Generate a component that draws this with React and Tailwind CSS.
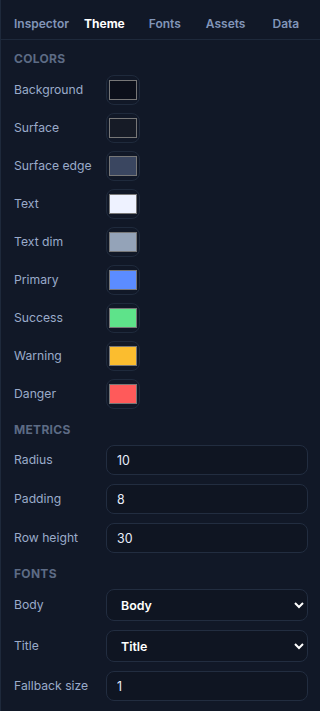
import React from 'react';

const colors = [
  { label: 'Background', value: '#0b0f1a' },
  { label: 'Surface', value: '#161b26' },
  { label: 'Surface edge', value: '#3a4660' },
  { label: 'Text', value: '#eef2ff' },
  { label: 'Text dim', value: '#94a3b8' },
  { label: 'Primary', value: '#5b8cff' },
  { label: 'Success', value: '#5ee38a' },
  { label: 'Warning', value: '#fbbd2f' },
  { label: 'Danger', value: '#ff5a5a' },
];

const tabs = ['Inspector', 'Theme', 'Fonts', 'Assets', 'Data'];

function Section({ title, children }) {
  return (
    <div className="flex flex-col">
      <div className="text-xs leading-4 font-bold uppercase tracking-wide text-[#5d6b85]">{title}</div>
      {children}
    </div>
  );
}

function Row({ label, children }) {
  return (
    <div className="flex items-center">
      <span className="w-[92px] shrink-0 text-[12.2px] text-[#9aabca]">{label}</span>
      {children}
    </div>
  );
}

const field =
  'h-[30px] min-w-0 flex-1 rounded-lg border border-[#222d40] bg-[#0f1522] px-2.5 text-[12.4px] text-[#e8eefc] outline-none';
const select =
  'h-8 min-w-0 flex-1 rounded-lg border border-[#222d40] bg-[#0f1522] px-2.5 text-[12.4px] font-semibold text-white outline-none';

export default function App() {
  return (
    <div
      className="min-h-[711px] w-[320px] bg-[#111827] border-l border-[#1e293b]"
      style={{ fontFamily: 'Inter, "Noto Sans", sans-serif' }}
    >
      {/* Tab bar */}
      <div className="flex h-10 items-center border-b border-[#1e293b] pt-2 pl-[13px]">
        {tabs.map((t, i) => (
          <button
            key={t}
            className={
              (t === 'Theme' ? 'text-white font-bold' : 'text-[#8195b8] font-semibold') +
              ' text-xs ' +
              (i === 0 ? '' : i === 1 ? 'ml-[15px]' : i === 2 ? 'ml-[24px]' : i === 3 ? 'ml-[25px]' : 'ml-[27px]')
            }
          >
            {t}
          </button>
        ))}
      </div>

      <div className="flex flex-col gap-[13px] pl-[13px] pr-3 pt-[11px]">
        <Section title="Colors">
          <div className="mt-[8px] flex flex-col gap-2">
            {colors.map((c) => (
              <Row key={c.label} label={c.label}>
                <input
                  type="color"
                  defaultValue={c.value}
                  className="h-[30px] w-[34px] rounded-lg border border-[#1f2a3c] bg-transparent"
                />
              </Row>
            ))}
          </div>
        </Section>

        <Section title="Metrics">
          <div className="mt-[7px] flex flex-col gap-[9px]">
            {[
              ['Radius', '10'],
              ['Padding', '8'],
              ['Row height', '30'],
            ].map(([l, v]) => (
              <Row key={l} label={l}>
                <input defaultValue={v} className={field} />
              </Row>
            ))}
          </div>
        </Section>

        <Section title="Fonts">
          <div className="mt-[7px] flex flex-col gap-[9px]">
            <Row label="Body">
              <select className={select}>
                <option>Body</option>
              </select>
            </Row>
            <Row label="Title">
              <select className={select}>
                <option>Title</option>
              </select>
            </Row>
            <Row label="Fallback size">
              <input defaultValue="1" className={field} />
            </Row>
          </div>
        </Section>
      </div>
    </div>
  );
}
